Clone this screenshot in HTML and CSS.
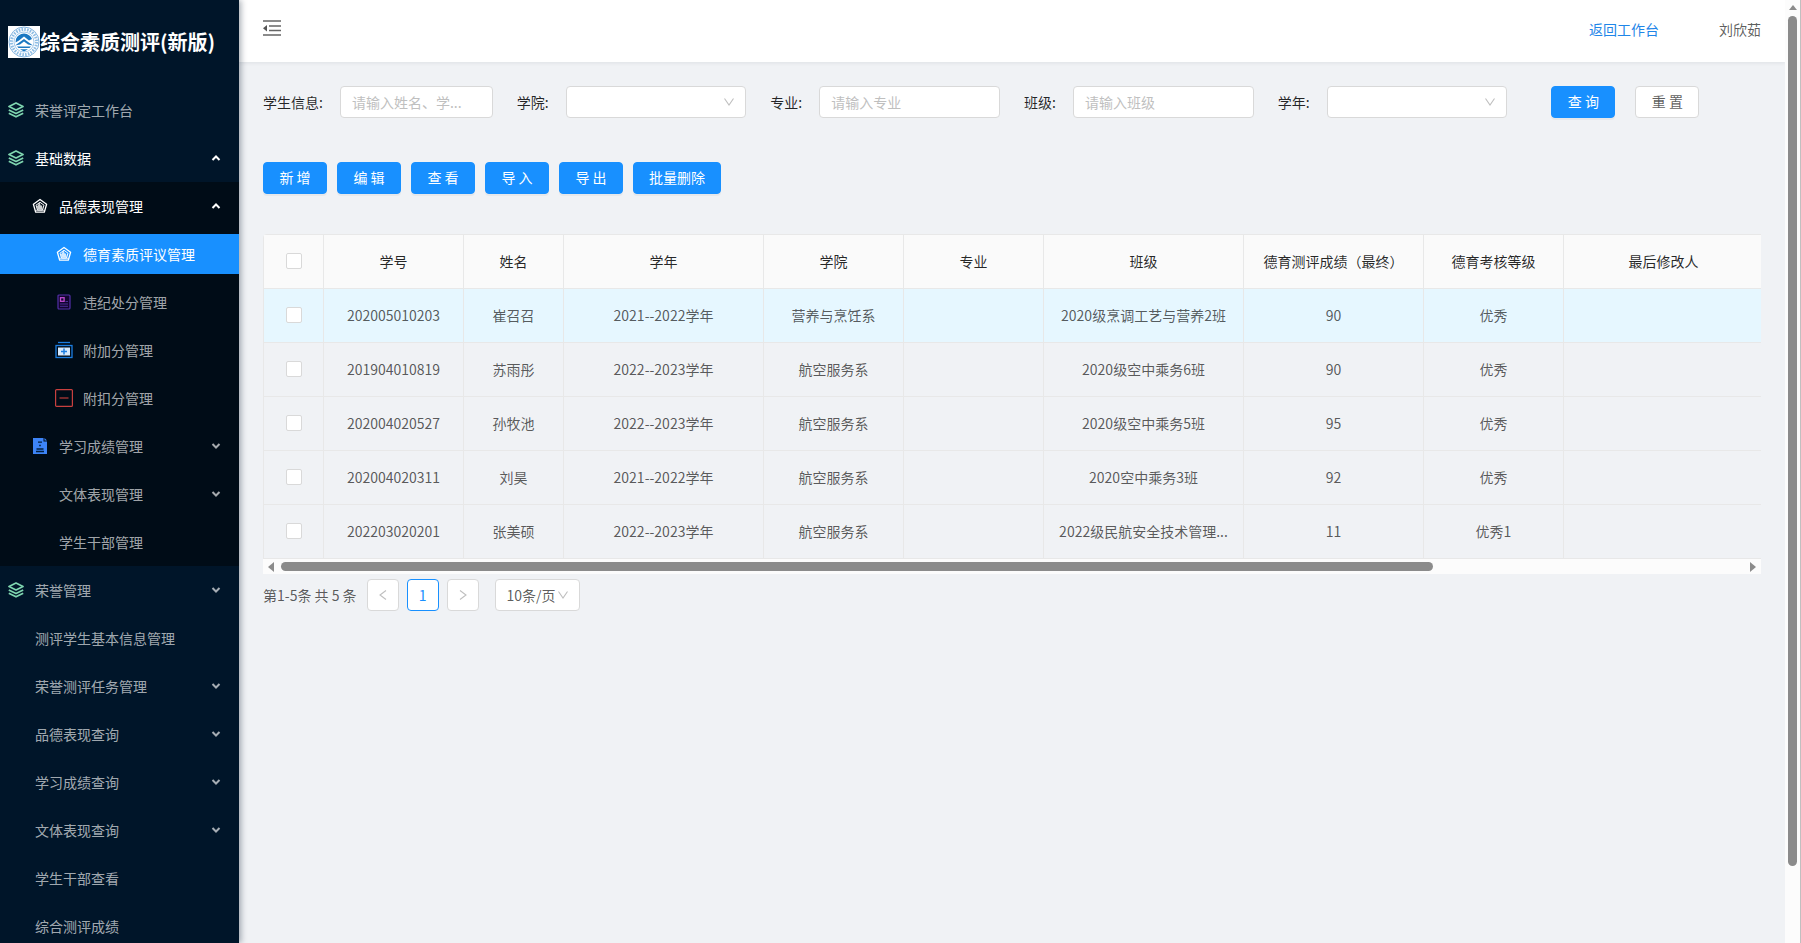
FILE: index.html
```html
<!DOCTYPE html>
<html lang="zh-CN">
<head>
<meta charset="utf-8">
<title>综合素质测评(新版)</title>
<link rel="stylesheet" href="styles.css">
</head>
<body>
<svg class="defs" aria-hidden="true">
  <symbol id="layers" viewBox="0 0 16 16"><g fill="none" stroke="currentColor" stroke-width="1.700" stroke-linejoin="round"><path d="M8 1 15 4.500 8 8 1 4.500Z"/><path d="M.8 8 8 11.500 15.200 8M.8 11.200 8 14.800 15.200 11.200"/></g></symbol>
  <symbol id="penta" viewBox="0 0 16 16"><g fill="none" stroke="currentColor" stroke-linejoin="round"><path d="M8 1.500 14.600 6.300 12.300 14.200H3.700L1.400 6.300Z" stroke-width="1.300"/><path d="M3.500 12.300h9" stroke-width=".8"/><path d="M8 4.300 12 7.200 10.500 12H5.500L4 7.200Z"/></g><path d="M7.500 4.500 9 8l1-1 .6 4.500H5.500L5 8.500Z" fill="currentColor" opacity=".8"/></symbol>
  <symbol id="down" viewBox="0 0 10 8"><path d="M1.500 2 5 5.500 8.500 2" fill="none" stroke="currentColor" stroke-width="2"/></symbol>
  <symbol id="up" viewBox="0 0 10 8"><path d="M1.500 6 5 2.500 8.500 6" fill="none" stroke="currentColor" stroke-width="2"/></symbol>
  <symbol id="thin-down" viewBox="0 0 12 12"><path d="M1.500 2.500 6 9 10.500 2.500" fill="none" stroke="currentColor" stroke-width="1.100"/></symbol>
</svg>
<div class="layout">
  <aside class="sider">
    <div class="brand">
      <svg class="brand-logo" viewBox="0 0 32 32" aria-hidden="true"><path fill="#fff" d="M0 0h32v32H0z"/><circle cx="16" cy="16" r="15" fill="none" stroke="#7fb2de" stroke-width="1"/><circle cx="16" cy="16" r="12.500" fill="none" stroke="#8fbde4" stroke-width="3" stroke-dasharray="1.600 1.200"/><circle cx="16" cy="16" r="10" fill="#fff" stroke="#8fbde4" stroke-width=".8"/><path fill="#1b78c2" d="M8 13Q10 8 16 7.500 22 8 24 13L21 14.500 16 10.500 11 14.500 7.500 16.500Z"/><path fill="#1b78c2" d="M7 19.500 16 13 25 19.500 20 18.500 16 15.500 12 18.500ZM9 20.500h14l-1.500 1.500h-11ZM12 23.200h8L16 25.500Z"/></svg>
      <h1 class="brand-title">综合素质测评(新版)</h1>
    </div>
    <nav class="menu">
      <a class="item" href="#"><svg class="ico layers"><use href="#layers"/></svg><span>荣誉评定工作台</span></a>
      <a class="item open" href="#"><svg class="ico layers"><use href="#layers"/></svg><span>基础数据</span><svg class="arrow"><use href="#up"/></svg></a>
      <div class="submenu">
        <a class="item level2 open" href="#"><svg class="ico"><use href="#penta"/></svg><span>品德表现管理</span><svg class="arrow"><use href="#up"/></svg></a>
        <a class="item level3 active" href="#"><svg class="ico"><use href="#penta"/></svg><span>德育素质评议管理</span></a>
        <a class="item level3" href="#"><svg class="ico" viewBox="0 0 16 16"><rect x="2" y="1" width="12" height="14" rx="1" fill="#12052e" stroke="#5330a8" stroke-width="1.200"/><rect x="4.500" y="3.700" width="3.600" height="3.600" fill="none" stroke="#c04bd0" stroke-width="1.300"/><path d="M9.500 7.500h2.500M4 10h8M4 12.300h8" stroke="#4a2c96"/></svg><span>违纪处分管理</span></a>
        <a class="item level3" href="#"><svg class="ico wide" viewBox="0 0 18 18"><path d="M3 1.500h12" stroke="#1b7de0" stroke-width="1.300"/><rect x="1" y="4.500" width="16" height="12" fill="none" stroke="#1b7de0" stroke-width="1.300"/><path d="M3 6.500h12v8H3z" fill="#d6e9fc"/><path d="M9 7.500v6M6 10.500h6" stroke="#1b7de0" stroke-width="1.500"/></svg><span>附加分管理</span></a>
        <a class="item level3" href="#"><svg class="ico wide" viewBox="0 0 18 18"><rect x=".6" y=".6" width="16.800" height="16.800" rx="1" fill="none" stroke="#c8403f" stroke-width="1.200"/><path d="M4.500 9h9" stroke="#8e3030" stroke-width="1.600"/></svg><span>附扣分管理</span></a>
        <a class="item level2" href="#"><svg class="ico" viewBox="0 0 16 16"><path d="M1 0h10.500v3.500H15V16H1Z" fill="#3d84f7"/><path d="M12.500 0 15 2.500H12.500Z" fill="#3d84f7"/><path d="M6 4.200h4M7.200 7.500h1.600M4.500 11h7M4 13.500h8" stroke="#03203f" stroke-width="1.300"/></svg><span>学习成绩管理</span><svg class="arrow"><use href="#down"/></svg></a>
        <a class="item level2" href="#"><i class="ico"></i><span>文体表现管理</span><svg class="arrow"><use href="#down"/></svg></a>
        <a class="item level2" href="#"><i class="ico"></i><span>学生干部管理</span></a>
      </div>
      <a class="item" href="#"><svg class="ico layers"><use href="#layers"/></svg><span>荣誉管理</span><svg class="arrow"><use href="#down"/></svg></a>
      <a class="item" href="#"><i class="ico"></i><span>测评学生基本信息管理</span></a>
      <a class="item" href="#"><i class="ico"></i><span>荣誉测评任务管理</span><svg class="arrow"><use href="#down"/></svg></a>
      <a class="item" href="#"><i class="ico"></i><span>品德表现查询</span><svg class="arrow"><use href="#down"/></svg></a>
      <a class="item" href="#"><i class="ico"></i><span>学习成绩查询</span><svg class="arrow"><use href="#down"/></svg></a>
      <a class="item" href="#"><i class="ico"></i><span>文体表现查询</span><svg class="arrow"><use href="#down"/></svg></a>
      <a class="item" href="#"><i class="ico"></i><span>学生干部查看</span></a>
      <a class="item" href="#"><i class="ico"></i><span>综合测评成绩</span></a>
    </nav>
  </aside>

  <div class="page">
    <header class="topbar">
      <button class="fold" type="button" aria-label="收起菜单"><svg viewBox="0 0 18 16"><path d="M0 1h18M6 6h12M6 10.500h12M0 15h18" stroke="#666" stroke-width="1.600"/><path d="M0 8.200 4 5v6.500Z" fill="#555"/></svg></button>
      <div class="account"><a href="#">返回工作台</a><span>刘欣茹</span></div>
    </header>

    <main class="content">
      <form class="filters">
        <div class="field"><label for="stu">学生信息:</label><input id="stu" type="text" placeholder="请输入姓名、学..."></div>
        <div class="field"><label for="college">学院:</label><span class="select"><select id="college"><option></option></select><svg><use href="#thin-down"/></svg></span></div>
        <div class="field"><label for="major">专业:</label><input id="major" type="text" placeholder="请输入专业"></div>
        <div class="field"><label for="cls">班级:</label><input id="cls" type="text" placeholder="请输入班级"></div>
        <div class="field"><label for="year">学年:</label><span class="select"><select id="year"><option></option></select><svg><use href="#thin-down"/></svg></span></div>
        <div class="actions"><button class="btn primary" type="button">查 询</button><button class="btn" type="button">重 置</button></div>
      </form>

      <div class="toolbar">
        <button class="btn primary" type="button">新 增</button>
        <button class="btn primary" type="button">编 辑</button>
        <button class="btn primary" type="button">查 看</button>
        <button class="btn primary" type="button">导 入</button>
        <button class="btn primary" type="button">导 出</button>
        <button class="btn primary" type="button">批量删除</button>
      </div>

      <div class="table-view">
        <table class="grid">
          <colgroup><col class="w60"><col class="w140"><col class="w100"><col class="w200"><col class="w140"><col class="w140"><col class="w200"><col class="w180"><col class="w140"><col class="w200"></colgroup>
          <thead><tr><th><input type="checkbox" aria-label="全选"></th><th>学号</th><th>姓名</th><th>学年</th><th>学院</th><th>专业</th><th>班级</th><th>德育测评成绩（最终）</th><th>德育考核等级</th><th>最后修改人</th></tr></thead>
          <tbody>
            <tr class="hover"><td><input type="checkbox" aria-label="选择崔召召"></td><td>202005010203</td><td>崔召召</td><td>2021--2022学年</td><td>营养与烹饪系</td><td></td><td>2020级烹调工艺与营养2班</td><td>90</td><td>优秀</td><td></td></tr>
            <tr><td><input type="checkbox" aria-label="选择苏雨彤"></td><td>201904010819</td><td>苏雨彤</td><td>2022--2023学年</td><td>航空服务系</td><td></td><td>2020级空中乘务6班</td><td>90</td><td>优秀</td><td></td></tr>
            <tr><td><input type="checkbox" aria-label="选择孙牧池"></td><td>202004020527</td><td>孙牧池</td><td>2022--2023学年</td><td>航空服务系</td><td></td><td>2020级空中乘务5班</td><td>95</td><td>优秀</td><td></td></tr>
            <tr><td><input type="checkbox" aria-label="选择刘昊"></td><td>202004020311</td><td>刘昊</td><td>2021--2022学年</td><td>航空服务系</td><td></td><td>2020空中乘务3班</td><td>92</td><td>优秀</td><td></td></tr>
            <tr><td><input type="checkbox" aria-label="选择张美硕"></td><td>202203020201</td><td>张美硕</td><td>2022--2023学年</td><td>航空服务系</td><td></td><td>2022级民航安全技术管理...</td><td>11</td><td>优秀1</td><td></td></tr>
          </tbody>
        </table>
      </div>
      <div class="hbar" aria-hidden="true">
        <svg viewBox="0 0 6 10"><path d="M6 0v10L0 5Z" fill="#8b8b8b"/></svg>
        <div class="htrack"><div class="thumb"></div></div>
        <svg viewBox="0 0 6 10"><path d="M0 0v10l6-5Z" fill="#8b8b8b"/></svg>
      </div>

      <div class="pager">
        <span class="total">第1-5条 共 5 条</span>
        <button class="page-btn" type="button" aria-label="上一页" disabled><svg viewBox="0 0 12 12"><path d="M9 1.500 3 6l6 4.500" fill="none" stroke="currentColor" stroke-width="1.100"/></svg></button>
        <button class="page-btn current" type="button">1</button>
        <button class="page-btn" type="button" aria-label="下一页" disabled><svg viewBox="0 0 12 12"><path d="M3 1.500 9 6l-6 4.500" fill="none" stroke="currentColor" stroke-width="1.100"/></svg></button>
        <span class="select size"><select aria-label="每页条数"><option>10条/页</option></select><svg><use href="#thin-down"/></svg></span>
      </div>
    </main>
  </div>

  <div class="vbar" aria-hidden="true">
    <svg viewBox="0 0 10 6"><path d="M0 6h10L5 0Z" fill="#8b8b8b"/></svg>
    <div class="vtrack"><div class="thumb"></div></div>
  </div>
</div>
</body>
</html>
```
FILE: styles.css
```css
* { box-sizing: border-box; }
body {
  margin: 0;
  font: 14px/22px "Noto Sans CJK SC", sans-serif;
  color: rgba(0, 0, 0, .65);
  background: #f0f2f5;
}
button, input, select { font: inherit; color: inherit; }
a { text-decoration: none; }
.defs { display: none; }
.layout { display: flex; height: 100vh; overflow: hidden; }

.sider {
  flex: none;
  width: 239px;
  overflow: hidden;
  background: #001529;
  box-shadow: 2px 0 6px rgba(0, 21, 41, .35);
  z-index: 2;
}
.brand { display: flex; align-items: center; height: 86px; padding: 0 0 2px 8px; }
.brand-logo { width: 32px; height: 32px; }
.brand-title { margin: 0; font-size: 20px; font-weight: 700; color: #fff; white-space: nowrap; }
.item {
  display: flex;
  align-items: center;
  height: 40px;
  margin: 4px 0;
  padding: 0 18px 0 8px;
  color: rgba(255, 255, 255, .65);
}
.menu, .submenu { display: flex; flex-direction: column; }
.submenu { background: #000c17; }
.ico { flex: none; width: 16px; height: 16px; margin-right: 11px; }
.ico.layers { color: #7fd6b0; }
.ico.wide { width: 18px; height: 18px; margin: 0 10px 0 -1px; }
.level2 { padding-left: 32px; }
.level3 { padding-left: 56px; }
.open, .active { color: #fff; }
.active { background: #1890ff; }
.arrow { width: 10px; height: 8px; margin-left: auto; }

.page { flex: 1; min-width: 0; }
.topbar {
  display: flex;
  justify-content: space-between;
  align-items: center;
  height: 62px;
  padding: 0 24px 4px;
  background: #fff;
  box-shadow: 0 1px 4px rgba(0, 21, 41, .08);
}
.fold { display: flex; padding: 0 0 2px; border: 0; background: none; }
.fold svg { width: 18px; height: 16px; }
.account { display: flex; gap: 60px; }
.account a { color: #1f86e8; }

.content { padding: 24px; }
.filters { display: grid; grid-template-columns: repeat(6, minmax(0, 1fr)); gap: 24px; }
.field { display: flex; align-items: center; gap: 17px; color: rgba(0, 0, 0, .85); }
.field label { flex: none; }
.field input, .select select {
  width: 100%;
  height: 32px;
  padding: 0 11px;
  border: 1px solid #d9d9d9;
  border-radius: 4px;
  background: #fff;
}
.field input { flex: 1; min-width: 0; }
.field input::placeholder { color: #bfbfbf; }
.select { position: relative; flex: 1; }
.select select { display: block; appearance: none; }
.select svg { position: absolute; right: 11px; top: 10px; width: 12px; height: 12px; color: #bfbfbf; pointer-events: none; }
.actions { display: flex; gap: 20px; padding-left: 20px; }
.btn {
  min-width: 64px;
  height: 32px;
  padding: 0 15px 2px;
  border: 1px solid #d9d9d9;
  border-radius: 4px;
  background: #fff;
  white-space: nowrap;
}
.btn.primary { border-color: #1890ff; background: #1890ff; color: #fff; box-shadow: 0 2px 0 rgba(0, 0, 0, .04); }
.toolbar { display: flex; gap: 10px; margin: 44px 0 40px; }

.table-view { overflow: hidden; border-radius: 4px 0 0 0; }
.grid { width: 1501px; table-layout: fixed; border-collapse: separate; border-spacing: 0; border: 1px solid #e8e8e8; border-width: 1px 0 0 1px; border-radius: 4px 0 0 0; }
.grid th, .grid td { height: 54px; padding: 0 8px 1px; border: 1px solid #e8e8e8; border-width: 0 1px 1px 0; text-align: center; white-space: nowrap; }
.grid th { background: #fafafa; font-weight: 400; color: rgba(0, 0, 0, .85); }
.grid .hover td { background: #e6f7ff; }
.grid input { display: block; appearance: none; width: 16px; height: 16px; margin: 0 auto; border: 1px solid #d9d9d9; border-radius: 2px; background: #fff; }
.w60 { width: 60px; }
.w100 { width: 100px; }
.w140 { width: 140px; }
.w180 { width: 180px; }
.w200 { width: 200px; }

.hbar { display: flex; align-items: center; gap: 7px; height: 15px; padding: 0 5px; background: #fcfcfc; }
.hbar svg { width: 6px; height: 10px; }
.htrack { flex: 1; }
.thumb { border-radius: 5px; background: #8b8b8b; }
.htrack .thumb { width: 78.8%; height: 9px; }
.vbar { display: flex; flex-direction: column; align-items: center; gap: 6px; flex: none; width: 16px; padding: 5px 0 13px; border-right: 1px solid #c0c0c0; background: #fcfcfc; }
.vbar svg { width: 8px; height: 5px; }
.vtrack { flex: 1; }
.vtrack .thumb { width: 9px; height: 93%; }

.pager { display: flex; align-items: center; gap: 8px; margin-top: 5px; }
.total { padding-right: 2px; }
.page-btn { display: flex; align-items: center; justify-content: center; width: 32px; height: 32px; padding: 0; border: 1px solid #d9d9d9; border-radius: 4px; background: #fff; }
.page-btn svg { width: 12px; height: 12px; color: #bfbfbf; }
.page-btn.current { border-color: #1890ff; color: #1890ff; }
.select.size { flex: none; width: 85px; margin-left: 8px; }
```
